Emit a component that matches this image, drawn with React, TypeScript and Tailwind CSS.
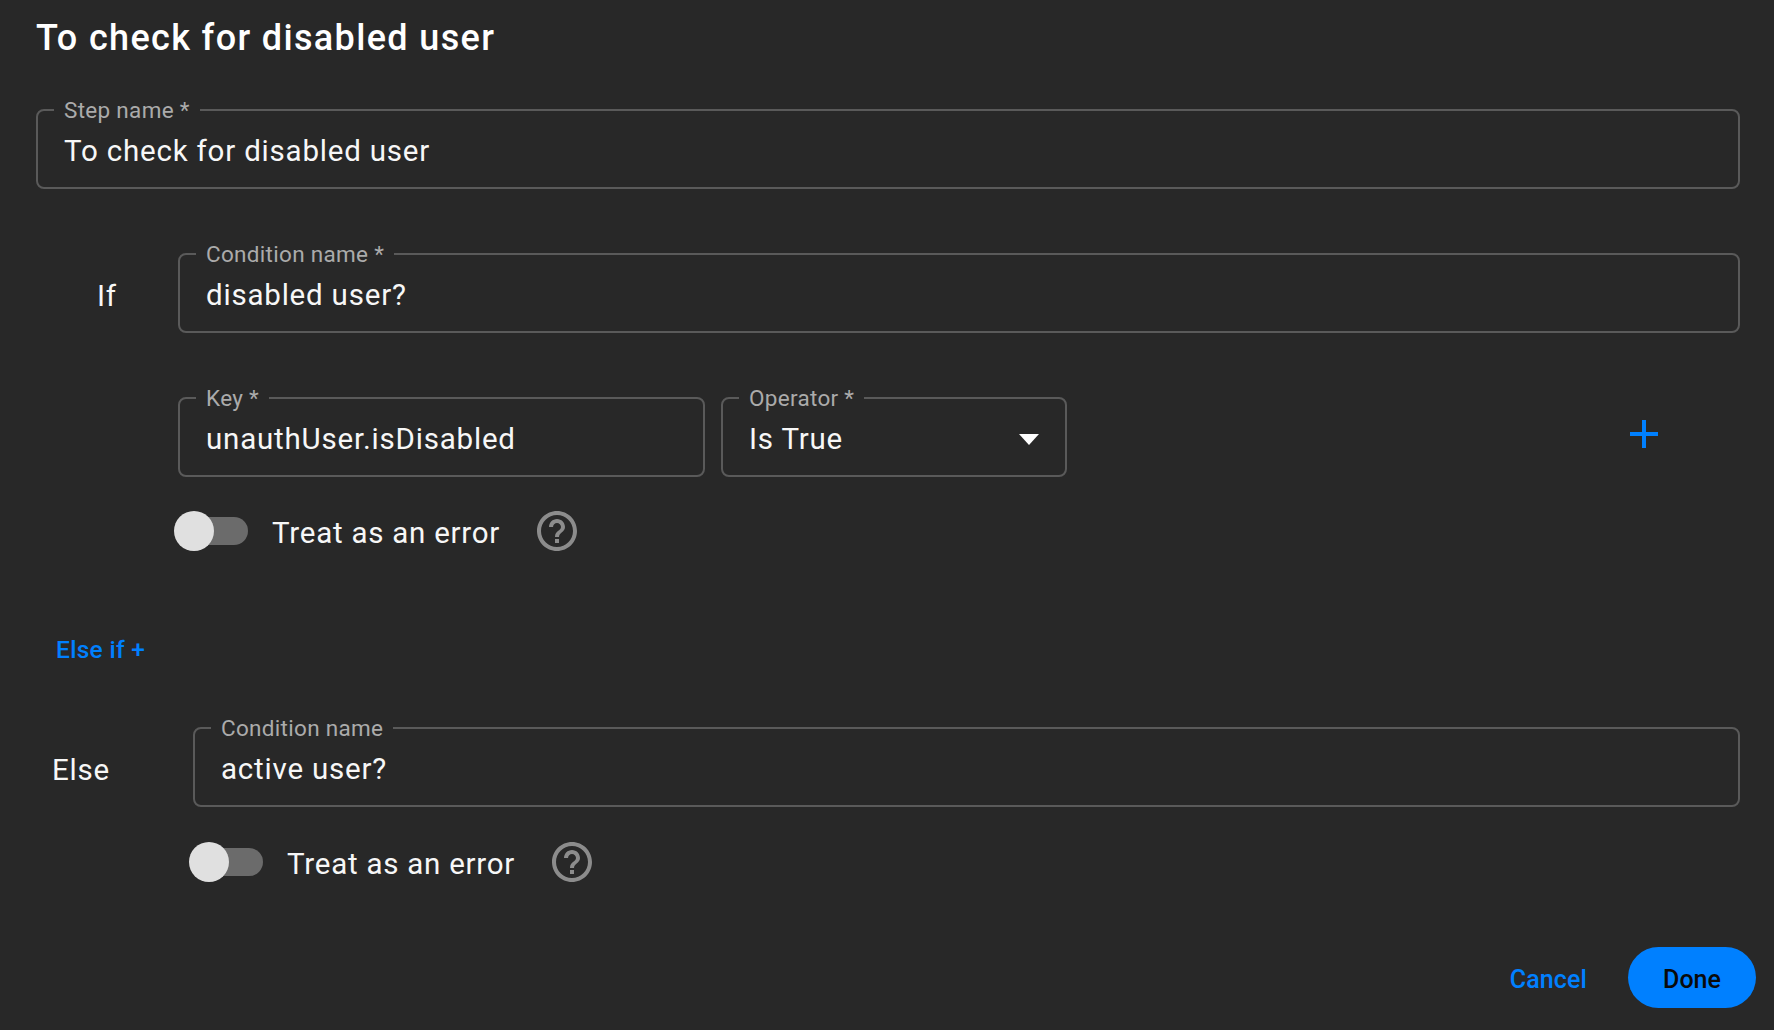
const font = "font-['Roboto',sans-serif]";

function Field({
  label,
  value,
  className = "",
  children,
}: {
  label: string;
  value: string;
  className?: string;
  children?: React.ReactNode;
}) {
  return (
    <fieldset
      className={`h-[80px] border-2 border-[#5a5a5a] rounded-lg pl-[26px] pr-[26px] ${className}`}
    >
      <legend className="-ml-[10px] px-[10px] h-0 leading-[0] text-[22.5px] tracking-[0.3px] text-[#ababab]">
        {label}
      </legend>
      <div className="w-full h-[76px] pt-[5px] flex items-center justify-between text-[29.5px] tracking-[0.8px] text-[#f7f7f7]">
        <span>{value}</span>
        {children}
      </div>
    </fieldset>
  );
}

function HelpIcon() {
  return (
    <svg viewBox="0 0 24 24" className="w-12 h-12 fill-[#8c8c8c]">
      <path d="M11 18h2v-2h-2v2zm1-16C6.48 2 2 6.48 2 12s4.48 10 10 10 10-4.48 10-10S17.52 2 12 2zm0 18c-4.41 0-8-3.59-8-8s3.59-8 8-8 8 3.59 8 8-3.59 8-8 8zm0-14c-2.21 0-4 1.79-4 4h2c0-1.1.9-2 2-2s2 .9 2 2c0 2-3 1.75-3 5h2c0-2.25 3-2.5 3-5 0-2.21-1.79-4-4-4z" />
    </svg>
  );
}

function ErrorToggle({ className = "" }: { className?: string }) {
  return (
    <div className={`flex items-center h-10 ${className}`}>
      <div className="relative w-[74px] h-10 flex items-center justify-end">
        <div className="w-[62px] h-7 rounded-full bg-[#6b6b6b]" />
        <div className="absolute left-0 top-0 w-10 h-10 rounded-full bg-[#e0e0e0]" />
      </div>
      <span className="ml-[24px] pt-[4px] text-[29.5px] tracking-[0.75px] text-[#f7f7f7]">
        Treat as an error
      </span>
      <div className="ml-[33px]">
        <HelpIcon />
      </div>
    </div>
  );
}

export default function App() {
  return (
    <div
      className={`${font} w-full h-[1030px] overflow-hidden bg-[#282828] pl-[36px] pr-[34px] flex flex-col`}
    >
      <h1 className="mt-[16px] h-[44px] leading-[44px] text-[36px] tracking-[1.35px] font-medium text-white">
        To check for disabled user
      </h1>

      <Field
        className="mt-[49px]"
        label="Step name *"
        value="To check for disabled user"
      />

      <div className="mt-[64px] flex items-center">
        <span className="w-[142px] pl-[61px] pt-[7px] text-[29.5px] tracking-[0.8px] text-[#f7f7f7]">
          If
        </span>
        <Field
          className="flex-1"
          label="Condition name *"
          value="disabled user?"
        />
      </div>

      <div className="mt-[64px] ml-[142px] flex items-center">
        <Field
          className="w-[527px]"
          label="Key *"
          value="unauthUser.isDisabled"
        />
        <Field className="ml-[16px] w-[346px]" label="Operator *" value="Is True">
          <svg viewBox="0 0 20 11" className="w-5 h-[11px] fill-white">
            <polygon points="0,0 20,0 10,11" />
          </svg>
        </Field>
        <svg viewBox="0 0 28 28" className="ml-[563px] -mt-[6px] w-7 h-7 fill-[#0080ff]">
          <rect x="12" y="0" width="4" height="28" />
          <rect x="0" y="12" width="28" height="4" />
        </svg>
      </div>

      <ErrorToggle className="mt-[34px] ml-[138px]" />

      <button className="mt-[85px] ml-[20px] self-start h-[28px] leading-[28px] text-[24.5px] tracking-[0.3px] font-medium text-[#0080ff]">
        Else if +
      </button>

      <div className="mt-[63px] flex items-center">
        <span className="w-[157px] pl-[16px] pt-[7px] text-[29.5px] tracking-[0.8px] text-[#f7f7f7]">
          Else
        </span>
        <Field className="flex-1" label="Condition name" value="active user?" />
      </div>

      <ErrorToggle className="mt-[35px] ml-[153px]" />

      <div className="mt-[65px] -mr-[16px] flex items-center justify-end">
        <button className="pt-[4px] text-[25px] tracking-[0.1px] font-medium text-[#0080ff]">
          Cancel
        </button>
        <button className="ml-[41px] pt-[5px] w-[128px] h-[61px] rounded-full bg-[#0080ff] text-[25px] font-medium text-[#0a0a0a]">
          Done
        </button>
      </div>
    </div>
  );
}
